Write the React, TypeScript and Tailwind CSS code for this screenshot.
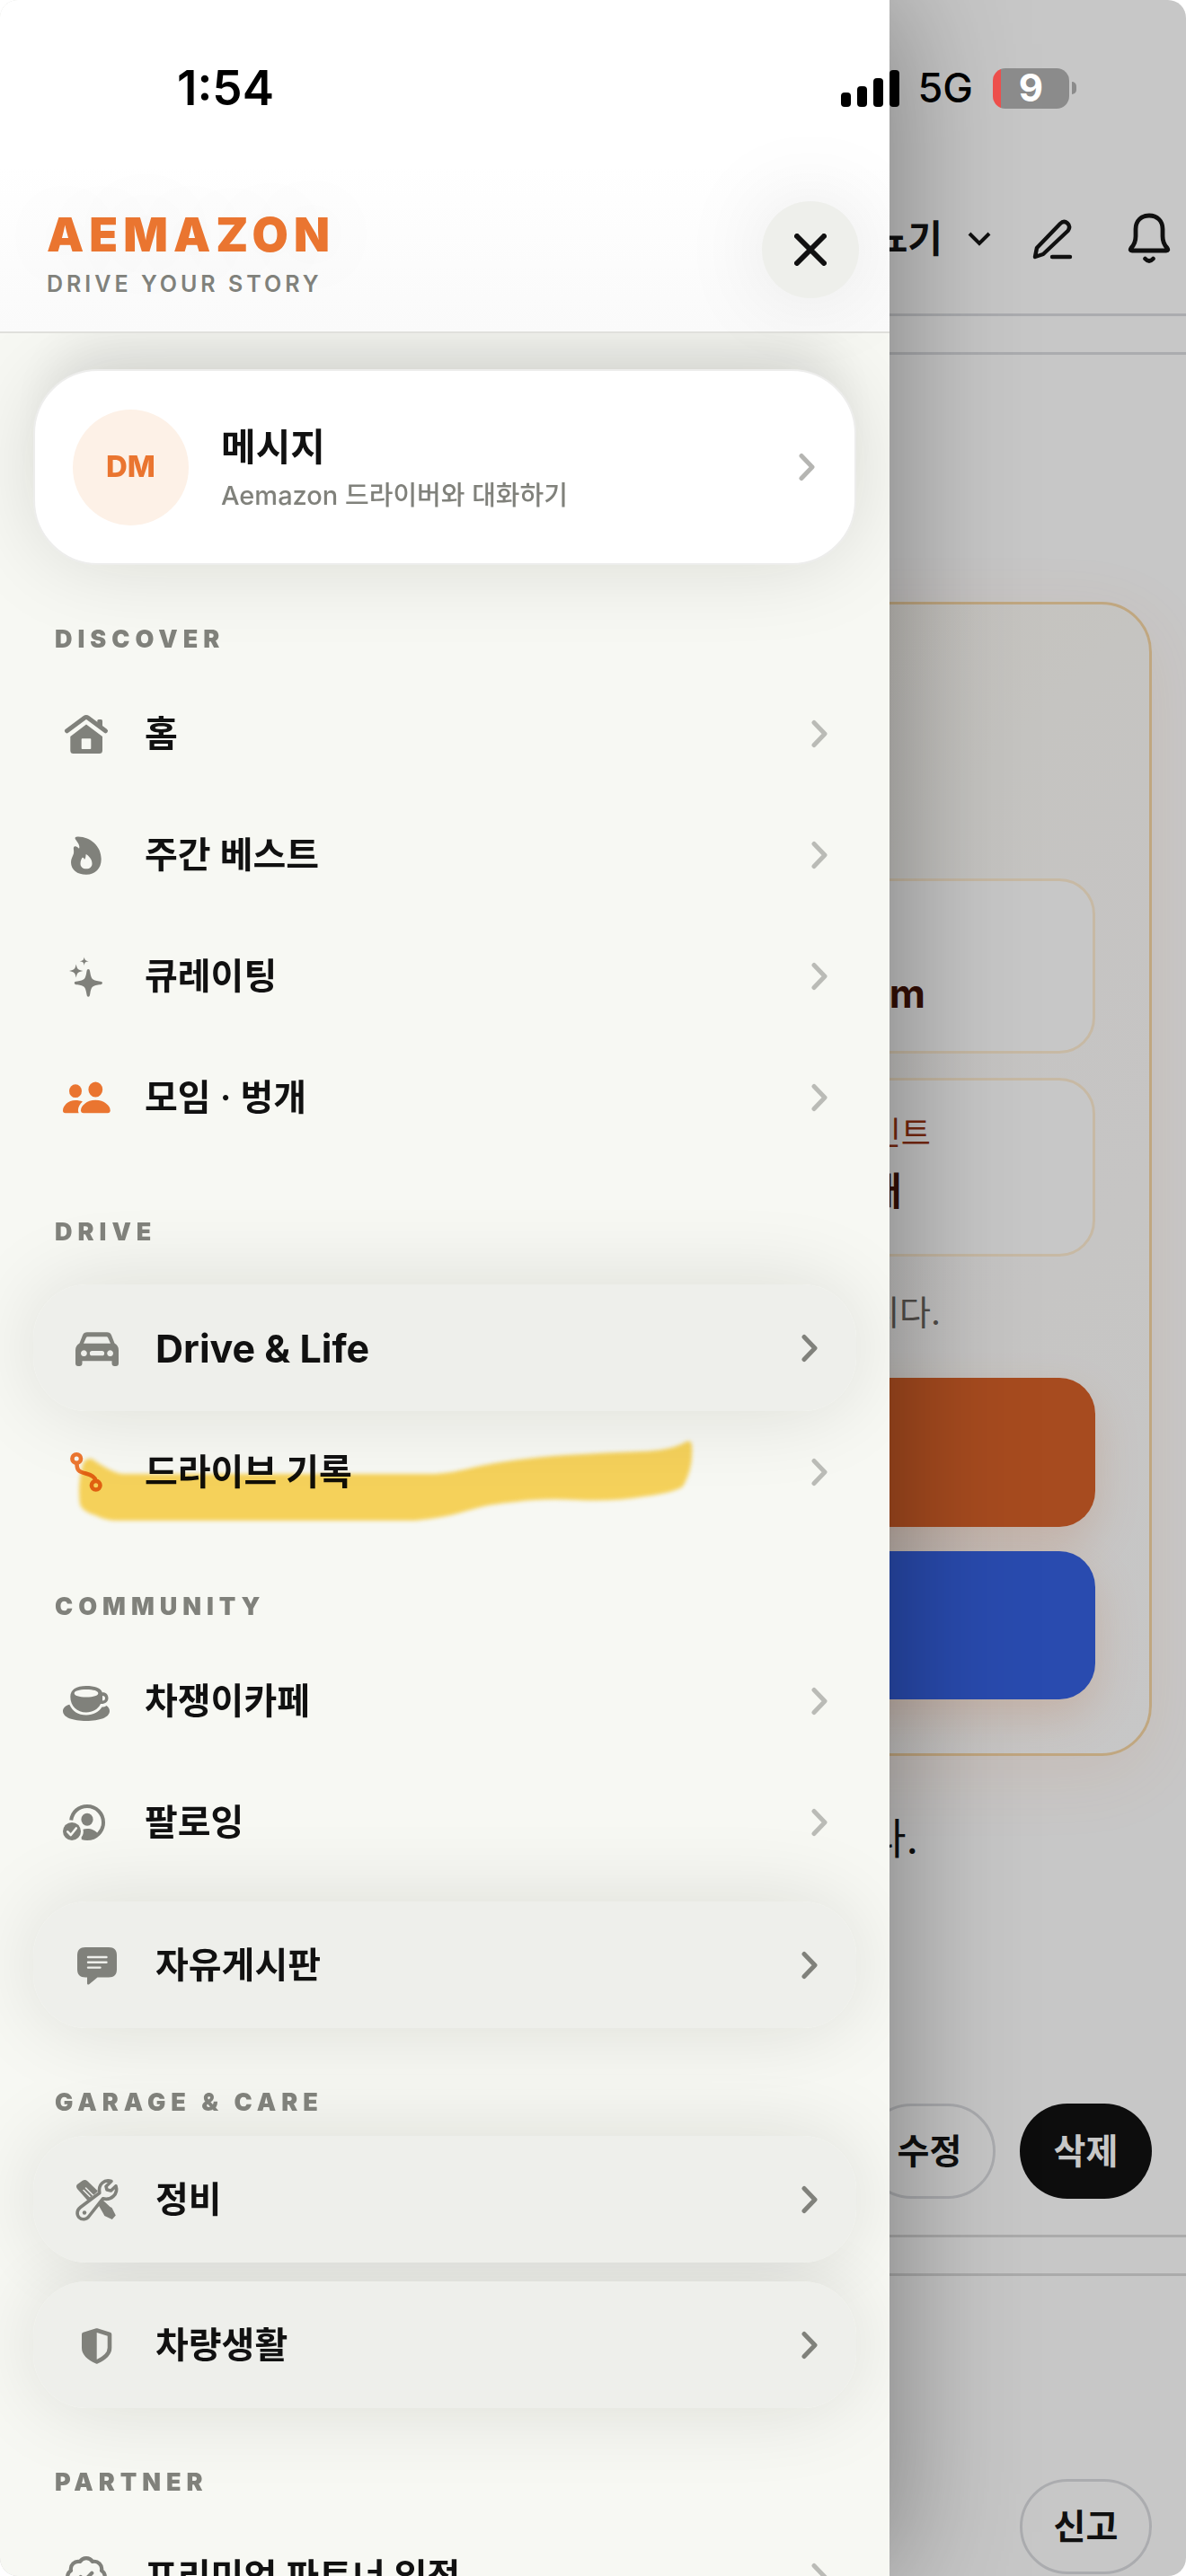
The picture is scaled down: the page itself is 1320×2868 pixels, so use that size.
import type { ReactNode } from 'react';
import { BadgeCheck } from 'lucide-react';

type Item = {
  label: string;
  icon: ReactNode;
  card?: boolean;
  spaced?: boolean;
  accent?: boolean;
  marked?: boolean;
  latin?: boolean;
};

const HomeIcon = () => (
  <svg viewBox="0 0 66 54" className="w-full h-full" fill="currentColor">
    <path d="M11.5 23.8 31 9.2q2-1.5 4 0L54.500 23.800" fill="none" stroke="currentColor" strokeWidth="5" strokeLinecap="round" />
    <path d="M45.300 17V12.500q0-1.500 1.500-1.500h2.700q1.500 0 1.500 1.500V23z" />
    <path fillRule="evenodd" d="M33 16.500 51 30v15.500q0 3.500-3.500 3.500h-29q-3.200 0-3.200-3.500V30zM28.500 32.300q-.8 0-.8.8v10.200q0 .8.8.8h9q.8 0 .8-.8V33.100q0-.8-.8-.8z" />
  </svg>
);

const FlameIcon = () => (
  <svg viewBox="0 0 66 54" className="w-full h-full" fill="currentColor">
    <path
      fillRule="evenodd"
      d="M21 9.500C19.800 7.300 21 6.300 24 6.400 38 6.800 49.700 17 49.700 31.500 49.700 42 43 48.800 33 48.800S16 43.500 16 35c0-4 1.900-6.500 2.900-9.500C19.800 22 18 19.300 19.500 17.800 21 16.800 23 17.600 25 19.800c1.500-3-1.500-6.800-4-10.300zM32.700 26c-.4 2-.2 4.500-1.700 6-.5-1.500-1.500-2.500-2.500-2-.5 1-2 3-2 6.500 0 3.500 2.500 5.800 6.500 5.800s6.500-2.300 6.500-5.800c0-5-3.500-8.500-6.800-10.500z"
    />
  </svg>
);

const SparklesIcon = () => (
  <svg viewBox="0 0 66 54" className="w-full h-full" fill="currentColor">
    <path d="M35.300 19c1.300 0 1.600 1 2 3.500 1.200 7.500 2.500 9 10 10 2.500.3 3.600.6 3.600 1.900s-1.100 1.600-3.600 1.900c-7.500 1-8.800 2.500-10 10-.4 2.500-.7 3.500-2 3.500s-1.600-1-2-3.500c-1.200-7.500-2.500-9-10-10-2.500-.3-3.500-.6-3.500-1.900s1-1.600 3.500-1.900c7.500-1 8.800-2.500 10-10 .4-2.500.7-3.500 2-3.500z" />
    <path d="M21.700 13.500c1.200 5.500 1.700 6.200 7.700 7.500-6 1.300-6.500 2-7.700 7.500-1.200-5.500-1.700-6.200-7.700-7.500 6-1.300 6.500-2 7.700-7.500z" />
    <path d="M30.700 5.500c.7 3.500 1.200 4 5 4.700-3.800.7-4.300 1.200-5 4.700-.7-3.500-1.200-4-5-4.700 3.800-.7 4.300-1.200 5-4.700z" />
  </svg>
);

const PeopleIcon = () => (
  <svg viewBox="0 0 66 54" className="w-full h-full" fill="currentColor">
    <ellipse cx="43.300" cy="18" rx="7.900" ry="8.600" />
    <path d="M43.300 29.700c10 0 16.400 6.500 16.400 11.500 0 2-1 3-3 3H30c-2 0-3-1-3-3 0-5 6.300-11.500 16.300-11.500z" />
    <ellipse cx="21" cy="19.700" rx="7" ry="7.400" />
    <path d="M21 30c3 0 5.600.5 7.900 1.500-3 2.500-5 6-5 9.500 0 1.200.3 2.300.8 3.200H9.800c-1.900 0-2.800-1-2.800-2.800C7 36.500 12.500 30 21 30z" />
  </svg>
);

const CarIcon = () => (
  <svg viewBox="0 0 66 54" className="w-full h-full" fill="currentColor">
    <path
      fillRule="evenodd"
      d="M13.500 21.500 17 12.500c1-2.300 2.500-3.200 5-3.200h22c2.500 0 4 .9 5 3.200l3.500 9c3 2 4.500 4 4.500 8V44c0 2-1.200 3-3 3h-1.500c-1.800 0-3-1-3-3v-2.800h-33V44c0 2-1.200 3-3 3H12c-1.800 0-3-1-3-3V29.500c0-4 1.500-6 4.500-8zM18 21.700h30l-2.800-6.200c-.4-1-1-1.300-2-1.300H22.800c-1 0-1.600.3-2 1.300zM18.400 29.300a3.400 3.400 0 1 0 .01 0zM47.600 29.300a3.400 3.400 0 1 0 .01 0zM27.500 30.100a2.600 2.600 0 0 0 0 5.200h11a2.600 2.600 0 0 0 0-5.200z"
    />
  </svg>
);

const RouteIcon = () => (
  <svg viewBox="0 0 66 54" className="w-full h-full" fill="none" stroke="currentColor" strokeWidth="4.600">
    <circle cx="22.200" cy="12" r="4.800" />
    <circle cx="43.700" cy="41.700" r="4.800" />
    <path d="M22.500 17c0 8 2 9.500 10 11.500 7.500 2 10.500 4 11 8" />
  </svg>
);

const CupIcon = () => (
  <svg viewBox="0 0 66 54" className="w-full h-full" fill="currentColor">
    <path
      fillRule="evenodd"
      d="M33 10c9 0 16.500 2.500 17.800 7.200 4-.4 6.700 2.300 6.700 6.300 0 4.300-3.500 6.800-8.500 6.500C46 36 40 39.500 33 39.500c-10 0-17.700-7-17.700-17.500C15.300 14 22 10 33 10zM33 14c-8.300 0-13.300 1.700-13.300 4.200S24.700 22.500 33 22.500s13.300-1.700 13.300-4.300S41.300 14 33 14zM51 21v5.500c2 0 3-1 3-2.800 0-1.700-1-2.700-3-2.700z"
    />
    <path d="M14.300 30.700C17.500 38 24 42.500 33 42.500c8 0 14-3.500 17.500-9 2 0 3.500-.5 5-1.500 2.300 1.500 3.500 3.700 3.500 6C59 45 48 49 33 49S7 45 7 38c0-3 2.500-6 7.300-7.300z" />
  </svg>
);

const FollowIcon = () => (
  <svg viewBox="0 0 66 54" className="w-full h-full" fill="currentColor">
    <path d="M16.200 24.500C17.300 15.500 24.500 9 34 9c10 0 18 8 18 18s-8 18-18 18c-2 0-4-.3-5.800-.9" fill="none" stroke="currentColor" strokeWidth="4" />
    <ellipse cx="34" cy="23.800" rx="6.600" ry="7" />
    <path d="M29.500 34.800c1.400-.5 2.900-.8 4.500-.8 5 0 9.500 2 12 5.500-3 4-7 6-12 6-2.500 0-5-.5-6.800-1.300 2.300-2.600 3.200-5.900 2.300-9.400z" />
    <circle cx="17" cy="36.900" r="10" />
    <path d="m12.300 37.300 3.500 3.700 6-7.500" fill="none" className="stroke-[#f6f7f2]" strokeWidth="2.600" strokeLinecap="round" strokeLinejoin="round" />
  </svg>
);

const BoardIcon = () => (
  <svg viewBox="0 0 66 54" className="w-full h-full" fill="currentColor">
    <path d="M20 7h26c6 0 9 3 9 9v15.600c0 6-3 9-9 9H33.500l-9 7.400c-1.500 1-2.500.5-2.500-1v-6.400h-2c-6 0-9-3-9-9V16c0-6 3-9 9-9z" />
    <path d="M23 18h20.500M23 23.800h20.500M23 29.600h13.500" fill="none" className="stroke-[#eeefeb]" strokeWidth="2.400" strokeLinecap="round" />
  </svg>
);

const ToolsIcon = () => (
  <svg viewBox="0 0 66 54" className="w-full h-full" fill="currentColor">
    {/* screwdriver */}
    <path d="M11 15q-2-3 0-5l5.500-4q3-2 5.500 0l12 11.500-11.500 10.500z" />
    <path d="m20.500 14 8 8M18 16.500l7 7" fill="none" className="stroke-[#eeefeb]" strokeWidth="1.500" strokeLinecap="round" />
    <path d="m34 32 5.500-4.500 8 7.500 2 1 4.300 8.500-4 4.500-8.500-4-1.300-2.500z" />
    {/* wrench */}
    <path
      d="M49 6.500C41 4 34 10 35.800 19.500L14.500 35.500c-4 3-4.500 8-1.500 11.200 3.200 3.200 8.500 2.500 11-1.200L39.500 25.800c9 2.500 17.500-5 14.500-14L48.500 17l-4.500-1-1-3.800z"
      className="fill-[#eeefeb]"
      stroke="currentColor"
      strokeWidth="3.600"
      strokeLinejoin="round"
    />
    <circle cx="19" cy="41.500" r="2.200" />
  </svg>
);

const ShieldIcon = () => (
  <svg viewBox="0 0 66 54" className="w-full h-full" fill="currentColor">
    <path d="M32.700 10.500 18.300 15v15c0 6.500 4.500 11 14.400 15.500C42.500 41 47 36.500 47 30V15z" fill="none" stroke="currentColor" strokeWidth="4.600" strokeLinejoin="round" />
    <path d="M32.700 9 17 15v16c0 7 6 12 15.700 15z" />
  </svg>
);

const Chevron = ({ className }: { className: string }) => (
  <svg viewBox="0 0 18 32" fill="none" stroke="currentColor" strokeWidth="5" strokeLinecap="round" strokeLinejoin="round" className={`w-[18px] h-[32px] shrink-0 ${className}`}>
    <path d="M3 3.500 15 16 3 28.500" />
  </svg>
);

const sections: { title: string; items: Item[] }[] = [
  {
    title: 'DISCOVER',
    items: [
      { label: '홈', icon: <HomeIcon /> },
      { label: '주간 베스트', icon: <FlameIcon /> },
      { label: '큐레이팅', icon: <SparklesIcon /> },
      { label: '모임 · 벙개', icon: <PeopleIcon />, accent: true },
    ],
  },
  {
    title: 'DRIVE',
    items: [
      { label: 'Drive & Life', icon: <CarIcon />, card: true, spaced: true, latin: true },
      { label: '드라이브 기록', icon: <RouteIcon />, accent: true, marked: true },
    ],
  },
  {
    title: 'COMMUNITY',
    items: [
      { label: '차쟁이카페', icon: <CupIcon /> },
      { label: '팔로잉', icon: <FollowIcon /> },
      { label: '자유게시판', icon: <BoardIcon />, card: true, spaced: true },
    ],
  },
  {
    title: 'GARAGE & CARE',
    items: [
      { label: '정비', icon: <ToolsIcon />, card: true },
      { label: '차량생활', icon: <ShieldIcon />, card: true, spaced: true },
    ],
  },
  {
    title: 'PARTNER',
    items: [{ label: '프리미엄 파트너 입점', icon: <BadgeCheck className="w-[50px] h-[50px]" /> }],
  },
];

function MenuRow({ item }: { item: Item }) {
  const iconColor = item.accent ? 'text-[#ea7530]' : 'text-[#80817b]';
  return (
    <li className="relative">
      <a
        href="#"
        className={`relative flex items-center gap-8 ${
          item.card
            ? 'h-[141px] pl-[38px] pr-[43px] rounded-[60px] bg-[#eeefeb] before:absolute before:inset-0 before:-z-10 before:rounded-[60px] before:shadow-[0_0_100px_-8px_rgba(20,22,10,0.14)]'
            : 'h-[135px] pl-[26px] pr-8'
        } ${item.spaced ? 'mt-[21px]' : ''}`}
      >
        <span className={`w-[66px] h-[54px] shrink-0 flex items-center justify-center ${iconColor}`}>{item.icon}</span>
        <span className={`flex-1 leading-[56px] text-[#111111] ${item.latin ? 'text-[43px] font-bold' : 'text-[40px] font-semibold'}`}>{item.label}</span>
        <Chevron className={item.card ? 'text-[#80817b]' : 'text-[#babbb6]'} />
      </a>
      {/* highlighter stroke over the row */}
      {item.marked && (
        <svg viewBox="0 0 700 110" className="absolute left-[45px] top-[24px] w-[700px] h-[110px] mix-blend-multiply pointer-events-none blur-[2px]">
          <path
            d="M20 29Q12 28 10 36Q4 58 7 80Q10 88 24 92Q36 98 48 98H380Q412 95 438 87T493 77Q520 73 560 75T636 71Q668 67 678 60Q690 40 688 14Q687 7 680 11Q664 20 630 21T548 25Q490 29 448 38Q415 47 385 46H56Q44 46 20 29z"
            fill="#f5d15a"
          />
        </svg>
      )}
    </li>
  );
}

function Drawer() {
  return (
    <aside className="absolute inset-y-0 left-0 w-3/4 flex flex-col overflow-clip bg-[#f7f8f3]">
      <header className="relative z-10 h-[371px] shrink-0 flex items-end justify-between pl-[52px] pr-[34px] pb-[37px] border-b-2 border-[#e0e0dc] bg-gradient-to-b from-white from-50% to-[#fafafa]">
        <div>
          <p className="text-[52px] leading-[60px] font-black tracking-[6px] text-[#ea7530] [text-shadow:0_0_80px_rgba(0,0,0,0.1)]">AEMAZON</p>
          <p className="mt-2 text-[25px] leading-8 font-semibold tracking-[4px] text-[#80817b]">DRIVE YOUR STORY</p>
        </div>
        <button aria-label="닫기" className="w-[108px] h-[108px] rounded-full bg-[#eeefeb] flex items-center justify-center shadow-[0_0_100px_rgba(0,0,0,0.1)]">
          <svg viewBox="0 0 36 36" className="w-9 h-9" fill="none" stroke="#111" strokeWidth="6" strokeLinecap="round">
            <path d="m3 3 30 30M33 3 3 33" />
          </svg>
        </button>
      </header>

      <nav className="relative z-0 px-[37px] pt-[40px]">
        <a
          href="#"
          className="flex items-center h-[218px] pl-[42px] pr-[44px] rounded-[72px] bg-white border-2 border-[#ededec] shadow-[0_0_100px_-8px_rgba(20,22,10,0.15),0_-50px_60px_-20px_rgba(20,22,10,0.07)]"
        >
          <span className="w-[129px] h-[129px] rounded-full bg-[#fdf1e7] flex items-center justify-center text-[33px] font-extrabold text-[#ea7530]">DM</span>
          <span className="flex-1 pl-9 pt-1">
            <span className="block text-[42px] leading-[60px] font-bold text-[#111111]">메시지</span>
            <span className="block text-[29px] leading-[48px] font-medium text-[#80817b]">Aemazon 드라이버와 대화하기</span>
          </span>
          <Chevron className="text-[#b5b5b2]" />
        </a>

        {sections.map((section) => (
          <section key={section.title}>
            <h2 className="pl-6 pt-[67px] pb-[21px] text-[27px] leading-8 font-black tracking-[6px] text-[#80817b]">{section.title}</h2>
            <ul>
              {section.items.map((item) => (
                <MenuRow key={item.label} item={item} />
              ))}
            </ul>
          </section>
        ))}
      </nav>
    </aside>
  );
}

/* Dimmed post page behind the drawer */
function PostPage() {
  return (
    <main className="bg-white text-[#151515]">
      <header className="h-[352px] pb-[53px] pr-[13px] flex items-end justify-end border-b-[3px] border-[#dcdde1]">
        <button className="flex items-center gap-7 text-[42px] leading-[60px] font-semibold">
          뇨기
          <svg viewBox="0 0 26 18" className="w-[26px] h-[18px]" fill="none" stroke="currentColor" strokeWidth="4">
            <path d="m2 3 11 11L24 3" />
          </svg>
        </button>
        <button aria-label="글쓰기" className="ml-11">
          <svg viewBox="0 0 50 56" className="w-[50px] h-[56px]" fill="none" stroke="currentColor" strokeWidth="4.400" strokeLinecap="round" strokeLinejoin="round">
            <path d="M5 46 7 36 33 9q4-4 8-.5t.5 8.500L14 43z" />
            <path d="M24 46h20" />
          </svg>
        </button>
        <button aria-label="알림" className="ml-[54px]">
          <svg viewBox="0 0 56 60" className="w-[56px] h-[60px]" fill="none" stroke="currentColor" strokeWidth="4.800" strokeLinecap="round" strokeLinejoin="round">
            <path d="M28 4c-9 0-15 6-15 15v8c0 6-2 10-5 13q-2 3 1 3h38q3 0 1-3c-3-3-5-7-5-13v-8c0-9-6-15-15-15z" />
            <path d="M23.500 52q4.500 5 9 0" />
          </svg>
        </button>
      </header>
      <div className="h-[43px] border-b-[3px] border-[#dcdde1]" />

      <div className="px-[38px] pt-[275px]">
        <div className="rounded-[56px] border-[3px] border-[#f7d6a5] bg-gradient-to-br from-[#fff7e8] via-[#fdfbf8] to-white px-[60px] pt-[305px] pb-[60px] shadow-[0_20px_80px_rgba(234,117,48,0.1)]">
          <div className="h-[195px] flex items-end justify-end pr-[186px] pb-[34px] rounded-[40px] border-[3px] border-[#ffedd2] bg-white text-[44px] leading-[60px] font-bold text-[#431407]">km</div>
          <div className="mt-[27px] h-[199px] flex flex-col justify-end pb-10 rounded-[40px] border-[3px] border-[#ffedd2] bg-white text-right">
            <p className="pr-[180px] text-[36px] leading-[52px] text-[#9a3412]">포인트</p>
            <p className="pr-[212px] mt-2 text-[43px] leading-[60px] font-bold text-[#431407]">개</p>
          </div>
          <p className="mt-8 pr-[172px] text-right text-[38px] leading-[60px] text-[#6b6661]">됩니다.</p>
          <button aria-label="기록 시작" className="mt-[43px] block w-full h-[166px] rounded-[40px] bg-[#d76028] shadow-[0_20px_50px_rgba(234,117,48,0.2)]" />
          <button aria-label="기록 보기" className="mt-[27px] block w-full h-[165px] rounded-[40px] bg-[#3561e0] shadow-[0_20px_50px_rgba(234,117,48,0.2)]" />
        </div>
        <p className="mt-[56px] pr-[260px] text-right text-[47px] leading-[72px]">합니다.</p>
        <div className="mt-[259px] flex justify-end gap-[27px] text-[39px] font-bold">
          <button className="w-[147px] h-[106px] rounded-full border-[3px] border-[#dcdde1]">수정</button>
          <button className="w-[147px] h-[106px] rounded-full bg-[#111111] text-white">삭제</button>
        </div>
      </div>
      <div className="mt-[40px] h-[46px] border-y-[3px] border-[#dcdcdc]" />
      <div className="px-[38px] pt-[226px] flex justify-end text-[39px] font-bold">
        <button className="w-[147px] h-[106px] rounded-full border-[3px] border-[#dcdde1]">신고</button>
      </div>
    </main>
  );
}

function StatusBar() {
  return (
    <div className="absolute inset-x-0 top-0 z-20 h-[196px] flex items-center pl-[197px] pr-[122px] text-black">
      <p className="flex-1 text-[53px] leading-[60px] font-semibold">1:54</p>
      <svg viewBox="0 0 65 42" className="w-[65px] h-[42px]">
        <rect x="0" y="26" width="11" height="16" rx="4" />
        <rect x="18" y="19" width="11" height="23" rx="4" />
        <rect x="36" y="10" width="11" height="32" rx="4" />
        <rect x="54" y="1" width="11" height="41" rx="4" />
      </svg>
      <p className="ml-[21px] text-[45px] leading-[60px] font-medium">5G</p>
      <div className="ml-[22px] w-[85px] h-[45px] rounded-[14px] bg-[linear-gradient(90deg,#ed4f4c_9px,#8b8b8b_9px)] flex items-center justify-center text-[42px] leading-none font-bold text-white">9</div>
      <div className="ml-[3px] w-[5px] h-[14px] rounded-r-full bg-[#8b8b8b]" />
    </div>
  );
}

export default function App() {
  return (
    <div className='relative h-dvh overflow-hidden rounded-[20px] font-["Inter","Noto_Sans_CJK_KR",sans-serif]'>
      <PostPage />
      <div className="absolute inset-0 bg-black/22" />
      <div className="absolute inset-y-0 left-0 w-3/4 shadow-[0_0_140px_rgba(0,0,0,0.4)]" />
      <Drawer />
      <StatusBar />
    </div>
  );
}
